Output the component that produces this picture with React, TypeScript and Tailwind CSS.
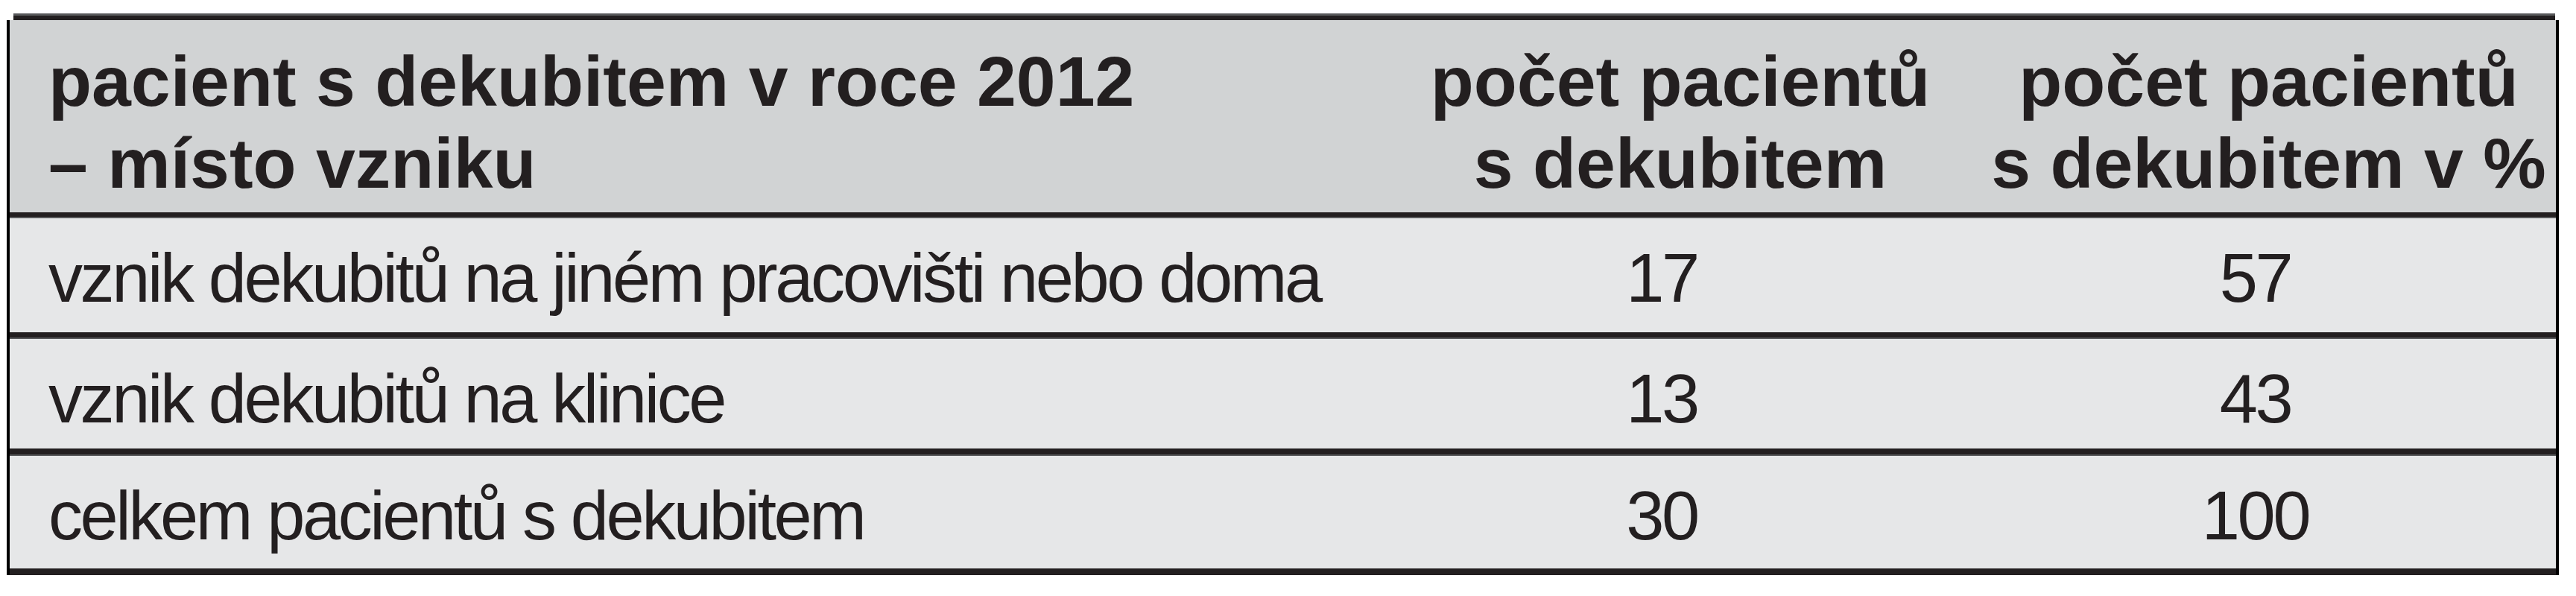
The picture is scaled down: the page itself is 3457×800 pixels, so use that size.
import React from 'react';

const rows = [
  { label: 'vznik dekubitů na jiném pracovišti nebo doma', count: '17', pct: '57', h: 'h-[153px]' },
  { label: 'vznik dekubitů na klinice', count: '13', pct: '43', h: 'h-[147px]' },
  { label: 'celkem pacientů s dekubitem', count: '30', pct: '100', h: 'h-[151px]' },
];

const grid = 'grid grid-cols-[1838px_808px_771px]';

const Divider: React.FC<{ className: string }> = ({ className }) => (
  <div className={`${className} bg-[#231f20] border-b-2 border-[#58595b]`} />
);

const App: React.FC = () => {
  return (
    <div className="min-h-[800px] bg-white pt-[18px] pl-[9px] font-['Liberation_Sans',Arial,sans-serif] text-[#231f20]">
      <div className="w-[3425px]">
        {/* top edge */}
        <div className="ml-[9px] h-[9px] w-[3411px] bg-[#231f20] border-t-[3px] border-[#58595b]" />

        <div className="border-x-4 border-black bg-[#f2f2f2] pl-[9px] pr-[4px]">
          <div className={`${grid} -ml-[9px] -mr-[4px] h-[258px] bg-[#d1d3d4] pt-[27px] text-[95px] font-bold leading-[110px]`}>
            <div className="pl-[52px]">
              pacient s dekubitem v roce 2012
              <br />– místo vzniku
            </div>
            <div className="text-center">
              počet pacientů
              <br />s dekubitem
            </div>
            <div className="text-center">
              počet pacientů
              <br />s dekubitem v %
            </div>
          </div>

          <Divider className="-ml-[9px] -mr-[4px] h-[8px]" />

          {rows.map((r, i) => (
            <React.Fragment key={r.label}>
              <div className={`${grid} -ml-[9px] -mr-[4px] ${r.h} bg-[#e6e7e8] pt-[29px] text-[92px] leading-[103px] tracking-[-3.4px]`}>
                <div className="pl-[52px] whitespace-nowrap">{r.label}</div>
                <div className="pr-[50px] text-center">{r.count}</div>
                <div className="pr-[36px] text-center">{r.pct}</div>
              </div>
              {i < rows.length - 1 && <Divider className={`-ml-[9px] -mr-[4px] ${i === 0 ? 'h-[9px]' : 'h-[10px]'}`} />}
            </React.Fragment>
          ))}

          <div className="-ml-[9px] -mr-[4px] h-[9px] bg-[#231f20]" />
        </div>
      </div>
    </div>
  );
};

export default App;
